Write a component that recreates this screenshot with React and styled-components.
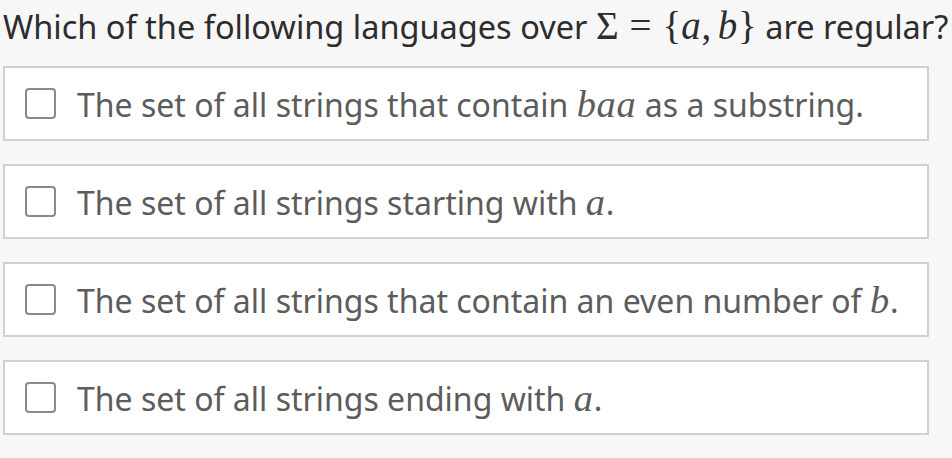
import React from "react";
import styled, { createGlobalStyle } from "styled-components";

const GlobalStyle = createGlobalStyle`
  html, body {
    margin: 0;
    padding: 0;
    background: #f7f7f7;
  }
`;

const Page = styled.div`
  width: 952px;
  height: 458px;
  padding: 0 3px;
  box-sizing: border-box;
  font-family: "Noto Sans", "Open Sans", sans-serif;
  background: #f7f7f7;
`;

const Question = styled.div`
  height: 66px;
  padding-top: 2px;
  box-sizing: border-box;
  font-size: 32.5px;
  line-height: 48px;
  color: #2d2d2d;
  white-space: nowrap;
`;

const Options = styled.div`
  display: flex;
  flex-direction: column;
  gap: 23px;
  width: 926px;
`;

const Option = styled.label`
  display: flex;
  align-items: center;
  gap: 21px;
  height: 75px;
  box-sizing: border-box;
  padding-left: 20px;
  background: #fff;
  border: 2px solid #d0d0d0;
  font-size: 32px;
  color: #5c5c5c;
  white-space: nowrap;
`;

const Box = styled.span`
  width: 31px;
  height: 31px;
  flex: none;
  box-sizing: border-box;
  border: 2px solid #8a8a8a;
  border-radius: 4px;
  background: #fff;
`;

// math run: serif, a bit larger than the body text (KaTeX style)
const Math = styled.span`
  font-family: "Liberation Serif", "DejaVu Serif", serif;
  font-size: 1.2em;
`;

const Var = styled.i`
  font-family: "Liberation Serif", "DejaVu Serif", serif;
  font-size: ${p => (p.inline ? "1.2em" : "1em")};
  letter-spacing: 0.02em;
`;

const Rel = styled.span`
  display: inline-block;
  margin: 0 0.28em;
`;

const Punct = styled.span`
  margin-right: 0.17em;
`;

const options = [
  ["The set of all strings that contain ", "baa", " as a substring."],
  ["The set of all strings starting with ", "a", "."],
  ["The set of all strings that contain an even number of ", "b", "."],
  ["The set of all strings ending with ", "a", "."]
];

export default function App() {
  return (
    <Page>
      <GlobalStyle />
      <Question>
        Which of the following languages over{" "}
        <Math>
          Σ<Rel>=</Rel>
          {"{"}
          <Var>a</Var>
          <Punct>,</Punct>
          <Var>b</Var>
          {"}"}
        </Math>{" "}
        are regular?
      </Question>
      <Options>
        {options.map(([before, m, after], i) => (
          <Option key={i}>
            <Box />
            <span>
              {before}
              <Var inline>{m}</Var>
              {after}
            </span>
          </Option>
        ))}
      </Options>
    </Page>
  );
}
